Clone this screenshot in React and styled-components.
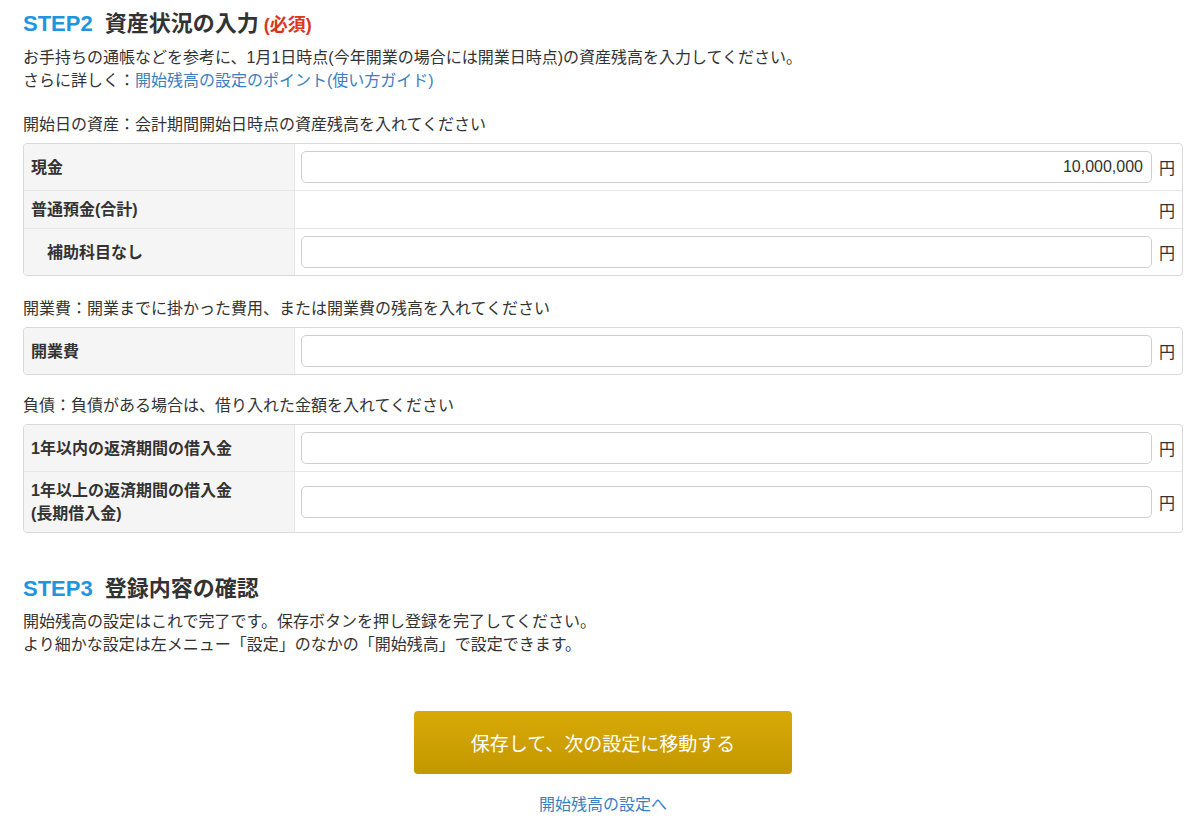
import React from 'react';
import styled, { createGlobalStyle } from 'styled-components';

const GlobalStyle = createGlobalStyle`
  body {
    margin: 0;
    background: #fff;
    color: #333;
    font-family: "Liberation Sans", "Noto Sans CJK JP", sans-serif;
    font-size: 16px;
  }
`;

const Page = styled.div`
  width: 1160px;
  padding: 10px 0 0 23px;
`;

const StepTitle = styled.h2`
  margin: ${(p) => (p.$first ? '0' : '42px')} 0 0;
  font-size: 22px;
  line-height: 28px;
  font-weight: bold;
  color: #333;
  display: flex;
  align-items: baseline;
`;

const StepNo = styled.span`
  color: #1e95e0;
  margin-right: 12px;
`;

const Required = styled.span`
  color: #d9361c;
  font-size: 18px;
  margin-left: 5px;
`;

const Lead = styled.p`
  margin: 7px 0 0;
  line-height: 23px;
`;

const Link = styled.a`
  color: #3a7fc1;
  text-decoration: none;
`;

const SectionLabel = styled.div`
  margin-top: ${(p) => p.$top || 21}px;
  line-height: 23px;
`;

const Table = styled.div`
  margin-top: 7px;
  border: 1px solid #d9d9d9;
  border-radius: 4px;
  overflow: hidden;
`;

const Row = styled.div`
  display: flex;
  min-height: ${(p) => p.$h || 46}px;
  & + & {
    border-top: 1px solid #e6e6e6;
  }
`;

const Label = styled.div`
  width: 271px;
  flex: none;
  box-sizing: border-box;
  padding-left: ${(p) => (p.$sub ? 23 : 7)}px;
  background: #f5f5f5;
  border-right: 1px solid #e6e6e6;
  font-weight: bold;
  line-height: 23px;
  display: flex;
  align-items: center;
`;

const Cell = styled.div`
  flex: 1;
  display: flex;
  align-items: center;
  gap: 7px;
  padding: 0 7px 0 6px;
`;

const Input = styled.input`
  flex: 1;
  height: 32px;
  box-sizing: border-box;
  border: 1px solid #cfcfcf;
  border-radius: 5px;
  padding: 0 8px;
  font: inherit;
  font-size: 16px;
  color: #333;
  text-align: right;
  outline: none;
`;

const Spacer = styled.div`
  flex: 1;
`;

const Yen = styled.span`
  width: 16px;
  flex: none;
`;

const Actions = styled.div`
  display: flex;
  flex-direction: column;
  align-items: center;
  margin-top: 55px;
`;

const SaveButton = styled.button`
  width: 378px;
  height: 63px;
  border: none;
  border-radius: 4px;
  background: linear-gradient(#d8a906, #c39700);
  color: #fff;
  font-family: inherit;
  font-size: 19px;
  cursor: pointer;
`;

const BottomLink = styled(Link)`
  margin-top: 19px;
  line-height: 23px;
`;

function FieldRow({ label, sub, value, total, h }) {
  return (
    <Row $h={h}>
      <Label $sub={sub}>{label}</Label>
      <Cell>
        {total ? <Spacer /> : <Input defaultValue={value} />}
        <Yen>円</Yen>
      </Cell>
    </Row>
  );
}

export default function App() {
  return (
    <Page>
      <GlobalStyle />
      <StepTitle $first>
        <StepNo>STEP2</StepNo>資産状況の入力<Required>(必須)</Required>
      </StepTitle>
      <Lead>
        お手持ちの通帳などを参考に、1月1日時点(今年開業の場合には開業日時点)の資産残高を入力してください。
        <br />
        さらに詳しく：<Link href="#">開始残高の設定のポイント(使い方ガイド)</Link>
      </Lead>

      <SectionLabel $top={21}>開始日の資産：会計期間開始日時点の資産残高を入れてください</SectionLabel>
      <Table>
        <FieldRow label="現金" value="10,000,000" />
        <FieldRow label="普通預金(合計)" total h={37} />
        <FieldRow label="補助科目なし" sub />
      </Table>

      <SectionLabel>開業費：開業までに掛かった費用、または開業費の残高を入れてください</SectionLabel>
      <Table>
        <FieldRow label="開業費" />
      </Table>

      <SectionLabel $top={19}>負債：負債がある場合は、借り入れた金額を入れてください</SectionLabel>
      <Table>
        <FieldRow label="1年以内の返済期間の借入金" />
        <FieldRow
          h={60}
          label={
            <span>
              1年以上の返済期間の借入金
              <br />
              (長期借入金)
            </span>
          }
        />
      </Table>

      <StepTitle>
        <StepNo>STEP3</StepNo>登録内容の確認
      </StepTitle>
      <Lead>
        開始残高の設定はこれで完了です。保存ボタンを押し登録を完了してください。
        <br />
        より細かな設定は左メニュー「設定」のなかの「開始残高」で設定できます。
      </Lead>

      <Actions>
        <SaveButton>保存して、次の設定に移動する</SaveButton>
        <BottomLink href="#">開始残高の設定へ</BottomLink>
      </Actions>
    </Page>
  );
}
